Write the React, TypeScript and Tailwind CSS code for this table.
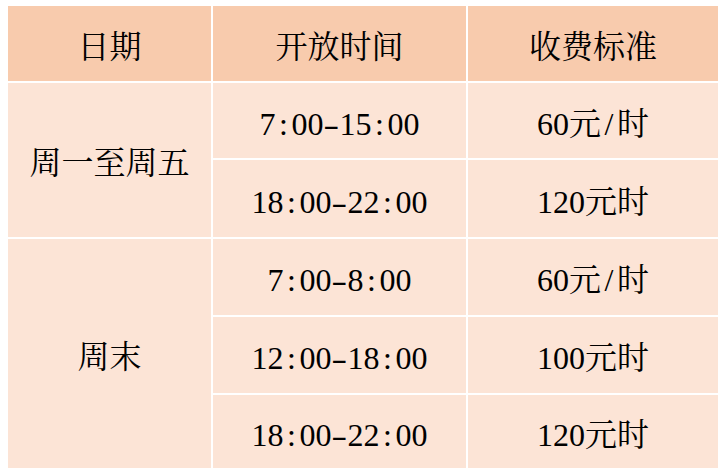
import React from "react";

const FONT = {
  fontFamily:
    '"Liberation Serif", "Noto Serif CJK SC", "Noto Sans CJK SC", serif',
};

function T({ s }: { s: string }) {
  const parts = s.split(/([:\-\/])/);
  return (
    <>
      {parts.map((p, i) =>
        p === ":" || p === "/" ? (
          <span key={i} className="inline-block w-[0.5em] text-center">
            {p}
          </span>
        ) : p === "-" ? (
          <span key={i} className="inline-block w-[0.5em] text-center">
            <span className="inline-block scale-x-[1.5]">-</span>
          </span>
        ) : (
          <React.Fragment key={i}>{p}</React.Fragment>
        )
      )}
    </>
  );
}

function Cell({
  children,
  head,
  className = "",
}: {
  children: React.ReactNode;
  head?: boolean;
  className?: string;
}) {
  return (
    <div
      className={`flex items-center justify-center pt-[6px] leading-none text-[32px] text-black ${
        head ? "bg-[#f8cbad]" : "bg-[#fce4d6]"
      } ${className}`}
    >
      {children}
    </div>
  );
}

export default function App() {
  return (
    <div className="w-[727px] h-[475px] bg-white pl-[8px] pt-[6px]" style={FONT}>
      <div className="grid grid-cols-[203px_253px_250px] grid-rows-[75px_75px_77px_76px_76px_73px] gap-[2px] w-[710px] h-[462px] bg-white">
        <Cell head>日期</Cell>
        <Cell head>开放时间</Cell>
        <Cell head>收费标准</Cell>

        <Cell className="row-span-2">周一至周五</Cell>
        <Cell><T s="7:00-15:00" /></Cell>
        <Cell><T s="60元/时" /></Cell>
        <Cell><T s="18:00-22:00" /></Cell>
        <Cell><T s="120元时" /></Cell>

        <Cell className="row-span-3">周末</Cell>
        <Cell><T s="7:00-8:00" /></Cell>
        <Cell><T s="60元/时" /></Cell>
        <Cell><T s="12:00-18:00" /></Cell>
        <Cell><T s="100元时" /></Cell>
        <Cell><T s="18:00-22:00" /></Cell>
        <Cell><T s="120元时" /></Cell>
      </div>
    </div>
  );
}
